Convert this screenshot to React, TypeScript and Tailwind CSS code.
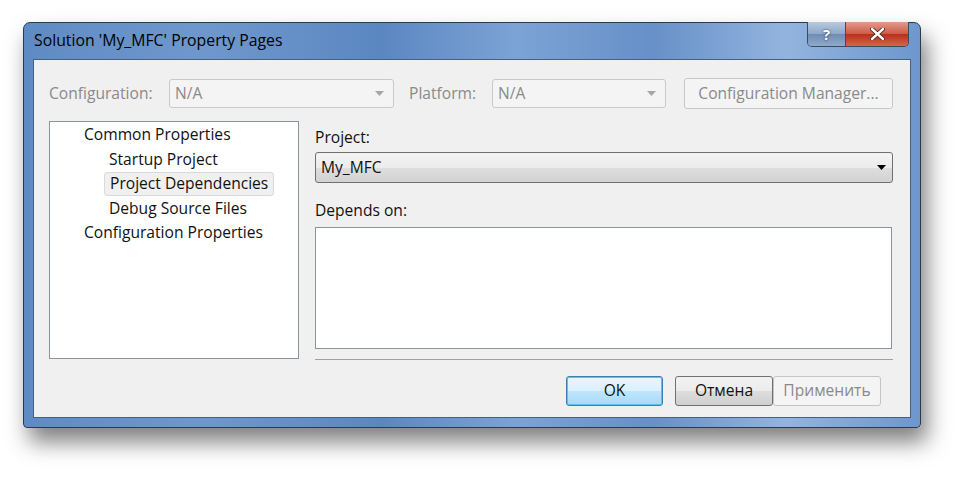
import React from "react";

const ui = "font-['Open_Sans','Noto_Sans',sans-serif]";

const tree = [
  { label: "Common Properties", level: 0 },
  { label: "Startup Project", level: 1 },
  { label: "Project Dependencies", level: 1, selected: true },
  { label: "Debug Source Files", level: 1 },
  { label: "Configuration Properties", level: 0 },
];

function Arrow({ disabled }: { disabled?: boolean }) {
  return (
    <svg width="9" height="5" viewBox="0 0 9 5">
      <path d="M0 0h9L4.5 5z" fill={disabled ? "#a6a6a6" : "#000"} />
    </svg>
  );
}

function DisabledCombo({ width }: { width: string }) {
  return (
    <div className={`${width} h-[29px] flex items-center justify-between pl-[5px] pr-[9px] rounded-[3px] border border-[#c9c9c9] bg-[#f4f4f4] text-[#8a8a8a]`}>
      <span>N/A</span>
      <Arrow disabled />
    </div>
  );
}

export default function App() {
  return (
    <div className={`w-[975px] h-[481px] bg-white pl-[23px] pt-[22px] text-[15.6px] leading-none ${ui}`}>
      {/* window frame */}
      <div className="relative w-[898px] h-[406px] flex flex-col rounded-t-[7px] rounded-b-[4px] border border-[#2d3a4d] bg-[linear-gradient(90deg,#5f8bc4_0%,#6e98cd_20%,#5b87c1_40%,#7ca3d6_55%,#6690c8_70%,#93b4de_85%,#6d97cd_100%)] shadow-[6px_14px_22px_rgba(0,0,0,0.5)]">
        {/* title bar */}
        <div className="h-[36px] flex items-center pl-[10px] text-[15.8px] text-black">
          Solution 'My_MFC' Property Pages
        </div>

        {/* caption buttons */}
        <div className="absolute top-[-1px] right-[11px] flex h-[25px] rounded-b-[5px] border border-t-0 border-[#3d4a5e] overflow-hidden">
          <div className="w-[38px] flex items-center justify-center bg-[linear-gradient(#b7c9de,#8ea8c8_50%,#6f8cb3_51%,#8fa9c9)] border-r border-[#3d4a5e] text-white font-bold text-[15px] [text-shadow:0_0_2px_#223]">
            ?
          </div>
          <div className="w-[62px] flex items-center justify-center bg-[linear-gradient(#e49a8c,#cf5a45_50%,#b8301b_51%,#d6644d)]">
            <svg width="15" height="12" viewBox="0 0 15 12">
              <path d="M2 1l11 10M13 1L2 11" stroke="#3a1a14" strokeWidth="4" strokeLinecap="round" />
              <path d="M2 1l11 10M13 1L2 11" stroke="#fff" strokeWidth="2.4" strokeLinecap="round" />
            </svg>
          </div>
        </div>

        {/* client area */}
        <div className="flex-1 mx-[9px] mb-[9px] border border-[#48607f] bg-[#f0f0f0] flex flex-col pl-[15px] pr-[16px] pt-[18px]">
          {/* top row */}
          <div className="flex items-center h-[31px]">
            <span className="w-[120px] text-[#8a8a8a]">Configuration:</span>
            <DisabledCombo width="w-[225px]" />
            <span className="ml-[15px] w-[83px] text-[#8a8a8a]">Platform:</span>
            <DisabledCombo width="w-[174px]" />
            <div className="ml-[18px] w-[209px] h-[31px] flex items-center justify-center rounded-[3px] border border-[#c5c8cb] bg-[#f4f4f4] text-[#8a8a8a]">
              Configuration Manager...
            </div>
          </div>

          <div className="flex mt-[12px]">
            {/* tree */}
            <div className="w-[250px] h-[238px] border border-[#8c939c] bg-white pt-[1px] flex flex-col">
              {tree.map((t) => (
                <div key={t.label} className={`h-[24.5px] flex items-center ${t.level ? "pl-[59px]" : "pl-[34px]"}`}>
                  <span
                    className={`px-[5px] -mx-[5px] h-[24px] flex items-center rounded-[3px] text-[#111] ${
                      t.selected ? "bg-[#f0f0f0] border border-[#dadada]" : ""
                    }`}
                  >
                    {t.label}
                  </span>
                </div>
              ))}
            </div>

            {/* right column */}
            <div className="ml-[16px] w-[578px] flex flex-col">
              <div className="h-[31px] flex items-center pt-[2px] text-[#111]">Project:</div>
              <div className="h-[31px] flex items-center justify-between pl-[5px] pr-[6px] rounded-[3px] border border-[#707070] bg-[linear-gradient(#f3f3f3_0%,#ececec_50%,#dedede_51%,#d2d2d2_100%)] text-[#111]">
                <span>My_MFC</span>
                <Arrow />
              </div>
              <div className="h-[44px] flex items-end pb-[8px] text-[#111]">Depends on:</div>
              <div className="h-[122px] mr-[1px] border border-[#8c939c] bg-white" />
              <div className="mt-[10px] h-[2px] border-t border-[#a0a0a0] border-b-white" />

              <div className="mt-[15px] flex pr-[12px] justify-end">
                <div className="w-[97px] h-[30px] flex items-center justify-center rounded-[3px] border border-[#3c7fb1] bg-[linear-gradient(#eaf6fd,#d9f0fc_50%,#bee6fd_51%,#a7d9f5)] shadow-[0_0_0_1px_#56c3f0_inset] text-[#111]">
                  OK
                </div>
                <div className="ml-[12px] w-[98px] h-[30px] flex items-center justify-center rounded-[3px] border border-[#707070] bg-[linear-gradient(#f2f2f2,#ebebeb_50%,#dddddd_51%,#cfcfcf)] text-[#111]">
                  Отмена
                </div>
                <div className="w-[108px] h-[30px] flex items-center justify-center rounded-[3px] border border-[#c2c5c8] bg-[#f4f4f4] text-[#8a8a8a]">
                  Применить
                </div>
              </div>
            </div>
          </div>
        </div>
      </div>
    </div>
  );
}
